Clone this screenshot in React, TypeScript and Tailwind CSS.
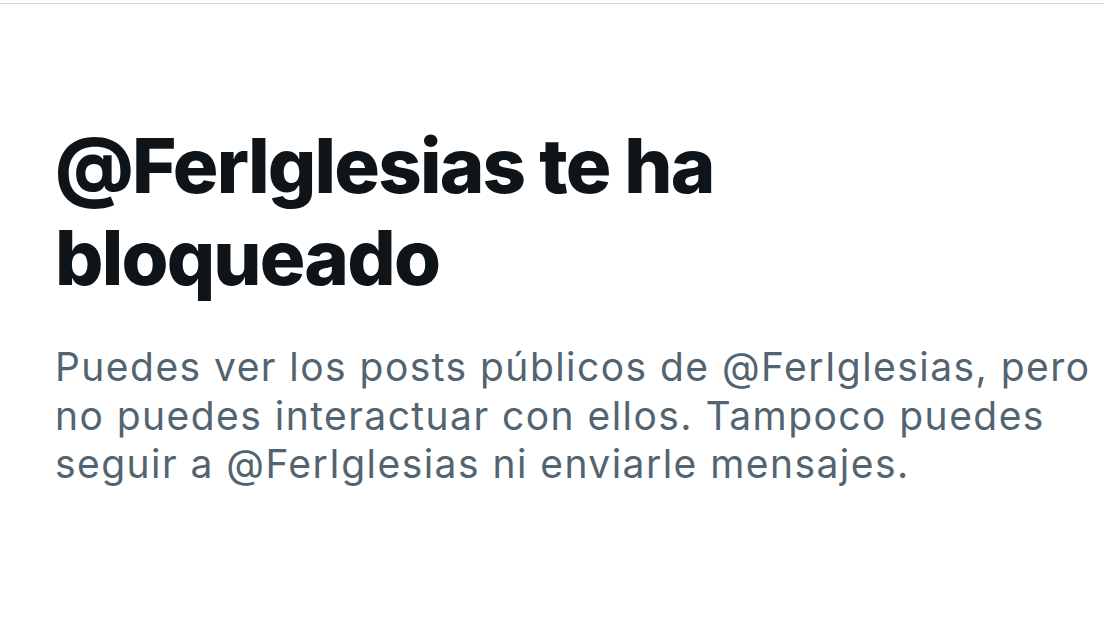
export default function App() {
  return (
    <div className="min-h-[621px] w-[1104px] bg-white" style={{ fontFamily: "Inter, 'Noto Sans', sans-serif" }}>
      <div className="h-[3px]" />
      <div className="h-px bg-[#d3d6d8]" />
      <div className="pl-[55px] pr-[3px] pt-[115px]">
        <h1 className="text-[76px] leading-[92px] font-extrabold tracking-[-1.8px] text-[#0f1419]">
          @FerIglesias te ha bloqueado
        </h1>
        <p className="mt-[40px] text-[39px] leading-[48.5px] tracking-[1.45px] text-[#536471]">
          Puedes ver los posts públicos de @FerIglesias, pero no puedes interactuar con ellos. Tampoco puedes seguir a @FerIglesias ni enviarle mensajes.
        </p>
      </div>
    </div>
  );
}
